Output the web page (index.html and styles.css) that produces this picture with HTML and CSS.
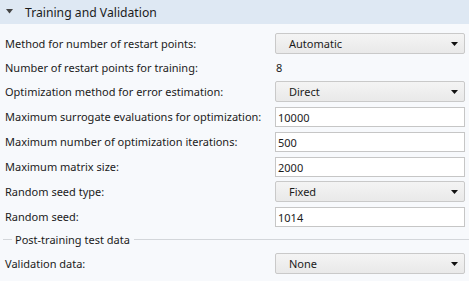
FILE: index.html
```html
<!DOCTYPE html>
<html>
<head>
<meta charset="utf-8">
<link rel="stylesheet" href="styles.css">
</head>
<body>
<div class="panel">
  <div class="header">
    <svg class="caret" width="7" height="5" viewBox="0 0 7 5"><path d="M0 0H7L3.5 4.5Z" fill="#444"/></svg>
    <span class="title">Training and Validation</span>
  </div>
  <div class="body">
    <div class="row h24"><span class="label lc">Method for number of restart points:</span>
      <div class="combo"><span>Automatic</span><svg class="arrow" width="7" height="4" viewBox="0 0 7 4"><path d="M0 0H7L3.5 4Z" fill="#111"/></svg></div></div>
    <div class="row h24"><span class="label lc">Number of restart points for training:</span>
      <span class="value lc">8</span></div>
    <div class="row h26"><span class="label lc">Optimization method for error estimation:</span>
      <div class="combo"><span>Direct</span><svg class="arrow" width="7" height="4" viewBox="0 0 7 4"><path d="M0 0H7L3.5 4Z" fill="#111"/></svg></div></div>
    <div class="row h25"><span class="label li">Maximum surrogate evaluations for optimization:</span>
      <div class="input">10000</div></div>
    <div class="row h25"><span class="label li">Maximum number of optimization iterations:</span>
      <div class="input">500</div></div>
    <div class="row h24"><span class="label li">Maximum matrix size:</span>
      <div class="input">2000</div></div>
    <div class="row h26"><span class="label lc">Random seed type:</span>
      <div class="combo"><span>Fixed</span><svg class="arrow" width="7" height="4" viewBox="0 0 7 4"><path d="M0 0H7L3.5 4Z" fill="#111"/></svg></div></div>
    <div class="row h24"><span class="label li">Random seed:</span>
      <div class="input">1014</div></div>
    <div class="section"><span class="line short"></span><span class="stitle">Post-training test data</span><span class="line long"></span></div>
    <div class="row h24"><span class="label lc">Validation data:</span>
      <div class="combo"><span>None</span><svg class="arrow" width="7" height="4" viewBox="0 0 7 4"><path d="M0 0H7L3.5 4Z" fill="#111"/></svg></div></div>
  </div>
</div>
</body>
</html>
```
FILE: styles.css
```css
html, body {
  margin: 0;
  padding: 0;
  background: #f7f9fc;
}
body {
  font-family: "Noto Sans", "Open Sans", sans-serif;
  font-size: 11px;
  color: #1b1b1b;
  width: 469px;
  height: 281px;
  overflow: hidden;
  white-space: nowrap;
}
.header {
  height: 24px;
  background: #dee8f3;
  display: flex;
  align-items: center;
}
.caret {
  margin-left: 6px;
  margin-top: -2px;
}
.title {
  margin-left: 12px;
  font-size: 12.2px;
}
.body {
  padding: 9px 4px 0 4px;
}
.row {
  display: flex;
  align-items: flex-start;
  justify-content: space-between;
}
.h24 { height: 24px; }
.h25 { height: 25px; }
.h26 { height: 26px; }
.label {
  padding-left: 1px;
}
.lc { line-height: 21px; }
.li { line-height: 20px; }
.value {
  width: 189px;
  padding-left: 1px;
}
.combo {
  height: 19px;
  border: 1px solid #c9c9c9;
  border-radius: 2px;
  background: linear-gradient(#f4f4f4, #e9e9e9);
  display: flex;
  align-items: center;
  justify-content: space-between;
  padding: 0 6px 0 13px;
  box-sizing: content-box;
  width: 169px;
}
.arrow {
  display: block;
}
.input {
  width: 186px;
  height: 18px;
  border: 1px solid #c6c6c6;
  background: #fff;
  padding-left: 2px;
  display: flex;
  align-items: center;
}
.section {
  height: 17px;
  padding-bottom: 5px;
  display: flex;
  align-items: center;
  margin-right: -4px;
}
.line {
  height: 1px;
  background: #d3d6da;
}
.line.short {
  width: 9px;
  margin-left: -1px;
}
.stitle {
  padding: 0 4px 0 3px;
}
.line.long {
  flex: 1;
}
```
